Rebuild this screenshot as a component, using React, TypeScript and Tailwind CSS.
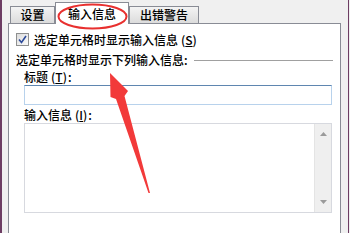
const Checkbox = () => (
  <div className="w-[13px] h-[13px] border border-[#8e8f8f] bg-gradient-to-br from-[#dcdcdc] to-[#fbfbfb] flex items-center justify-center">
    <svg width="9" height="9" viewBox="0 0 9 9">
      <path d="M1 4.5 L3.5 7.5 L8 1" fill="none" stroke="#2c4a9a" strokeWidth="1.6" />
    </svg>
  </div>
);

const Tab = ({ label, active = false, width }: { label: string; active?: boolean; width: string }) =>
  active ? (
    <div
      className={`${width} h-[22px] -mb-px bg-white border border-b-0 border-[#898c95] flex items-center justify-center relative z-10`}
    >
      {label}
    </div>
  ) : (
    <div
      className={`${width} h-[17px] bg-gradient-to-b from-[#f4f4f4] to-[#dcdcdc] border border-b-0 border-[#898c95] flex items-center justify-center`}
    >
      {label}
    </div>
  );

const Mnemonic = ({ k }: { k: string }) => (
  <span className="ml-[3px] mr-[1px]">
    (<span className="underline">{k}</span>)
  </span>
);

export default function App() {
  return (
    <div className="w-[350px] h-[233px] bg-[#f0f0f0] flex overflow-hidden relative text-[12px] leading-[16px] font-medium text-black font-['Noto_Sans_CJK_SC',sans-serif]">
      <div className="w-[2px] bg-[#6d3d63]" />
      <div className="flex-1 flex flex-col pl-[6px] pr-[7px]">
        {/* tab strip */}
        <div className="h-[23px] flex items-end pl-[2px] shrink-0">
          <Tab label="设置" width="w-[45px]" />
          <Tab label="输入信息" width="w-[74px]" active />
          <Tab label="出错警告" width="w-[70px]" />
        </div>

        {/* tab panel */}
        <div className="flex-1 bg-white border border-b-0 border-[#898c95] flex flex-col">
          <div className="mt-[9px] ml-[7px] flex items-center h-[13px]">
            <Checkbox />
            <span className="ml-[5px]">
              选定单元格时显示输入信息
              <Mnemonic k="S" />
            </span>
          </div>

          <div className="mt-[6px] ml-[7px] mr-[7px] flex items-center">
            <span>选定单元格时显示下列输入信息:</span>
            <div className="flex-1 h-px bg-[#a0a0a0] ml-[6px]" />
          </div>

          <div className="mt-[1px] ml-[15px]">
            标题
            <Mnemonic k="T" />:
          </div>
          <div className="ml-[15px] w-[308px] h-[20px] border border-[#b8d2ec] border-t-[#5f86b0] bg-white" />

          <div className="mt-[2px] ml-[15px]">
            输入信息
            <Mnemonic k="I" />:
          </div>
          <div className="ml-[15px] w-[308px] h-[90px] border border-[#d7d9df] bg-white flex justify-end">
            <div className="w-[17px] bg-[#efefef] border-l border-[#e4e4e4] flex flex-col items-center justify-between py-[8px]">
              <svg width="7" height="4" viewBox="0 0 7 4">
                <path d="M0 4 L3.5 0 L7 4 Z" fill="#9a9a9a" />
              </svg>
              <svg width="7" height="4" viewBox="0 0 7 4">
                <path d="M0 0 L3.5 4 L7 0 Z" fill="#9a9a9a" />
              </svg>
            </div>
          </div>
        </div>
      </div>
      <div className="w-px bg-[#6d3d63]" />
      <div className="w-px" />

      {/* annotation overlay */}
      <svg className="absolute inset-0 z-20 pointer-events-none" width="350" height="233" viewBox="0 0 350 233">
        <ellipse cx="92.5" cy="16.5" rx="34" ry="12" fill="none" stroke="#e8302f" strokeWidth="2" />
        <polygon
          points="110,73 128,91 124.5,96 150,193 148.5,193 116,99 110.5,97"
          fill="#f23a3a"
        />
      </svg>
    </div>
  );
}
